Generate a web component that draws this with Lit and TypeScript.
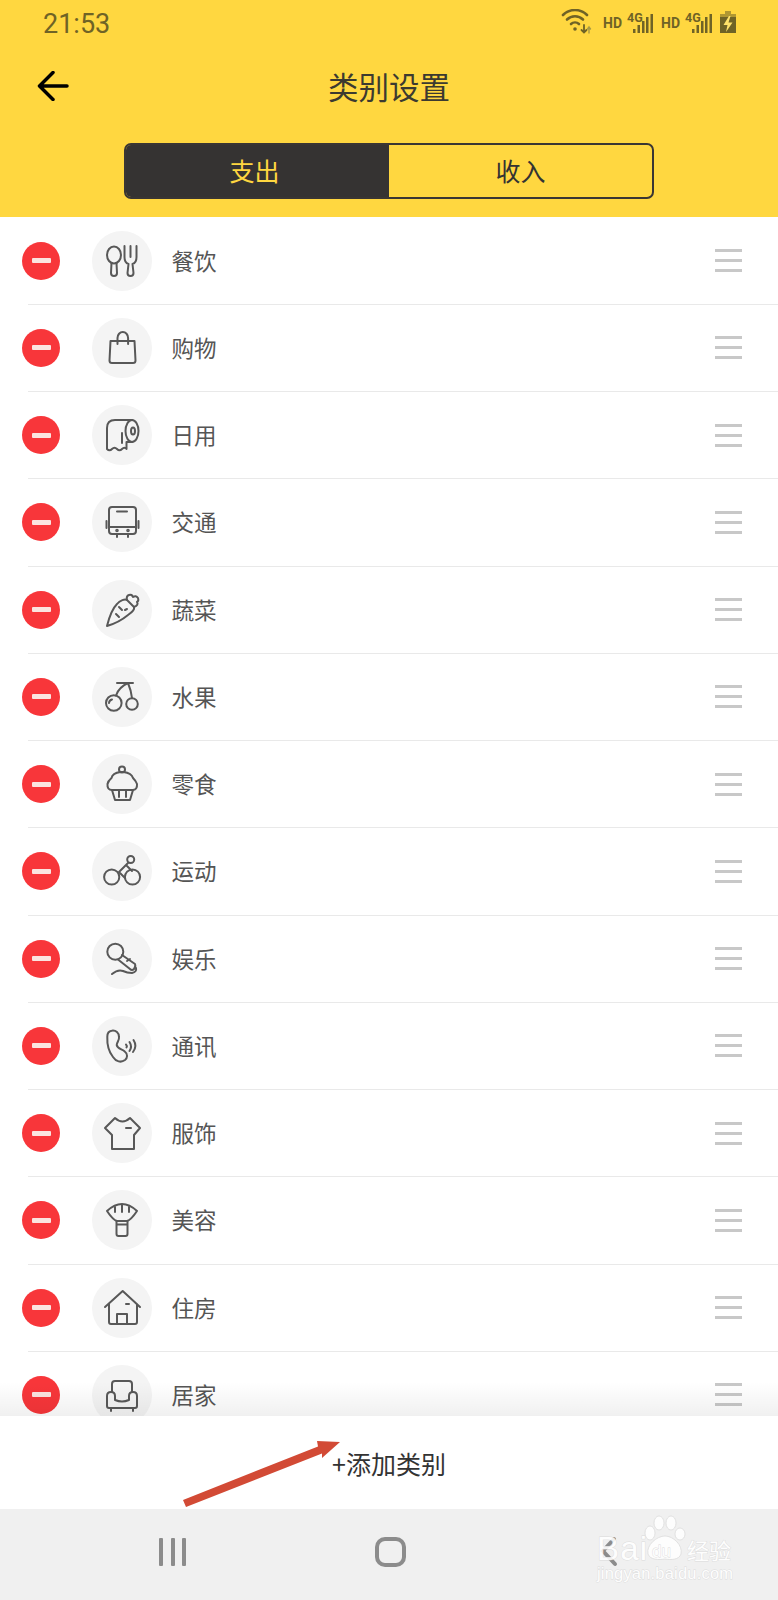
import { LitElement, html, css, svg } from 'lit';
import { customElement } from 'lit/decorators.js';

const icons: Record<string, unknown> = {
  food: svg`<ellipse cx="22" cy="24" rx="7" ry="8.5"/><path d="M19.5 32 L19 42 a3 3 0 0 0 6 0 L24.5 32"/><path d="M32.5 15 V26 q0 6 4 7 L35.5 42 a3 3 0 0 0 6 0 L40.5 33 q4-1 4-7 V15 M38.5 15 V26"/>`,
  bag: svg`<path d="M18.5 23 H42.5 L43.5 42.5 a2.5 2.5 0 0 1-2.5 2.5 H20 a2.5 2.5 0 0 1-2.5-2.5 Z"/><path d="M25.5 26 V20 a5.3 6 0 0 1 10.6 0 V26"/>`,
  roll: svg`<ellipse cx="40" cy="26" rx="6.5" ry="11"/><ellipse cx="41" cy="26" rx="2" ry="3.5"/><path d="M40 15 H23 q-8 0-8 8 V44 q2.5 2.5 5 0 t5 0 t5 0 t4.5 0 V37 H40"/><path d="M30 28 V38"/>`,
  bus: svg`<rect x="17" y="15" width="27" height="27" rx="3"/><path d="M25 19.5 H35 M17 35 H44 M14.5 29 V36 M46.5 29 V36 M25 42 V45 M36 42 V45"/><circle cx="25" cy="38.5" r=".8"/><circle cx="36" cy="38.5" r=".8"/>`,
  carrot: svg`<path d="M15 46 C17 38 21 28 25 24 C28 20 33 19 35 20 L42 27 C43 30 39 33 36 35 C30 40 22 44 15 46Z"/><path d="M35 20 q-1-4 2-5 q3-1 4 2 q3-2 5 1 q1 3-1 4 q2 3-3 5"/><path d="M27 27 l3 3 M24 34 l3 3 M33 30 l2-1"/>`,
  cherry: svg`<circle cx="21.8" cy="36" r="7.8"/><circle cx="40" cy="37" r="5.8"/><path d="M25 16 H41 M36 16 Q27 20 24 28.5 M36 16 Q39 23 40 31"/><path d="M17 36 a4 4 0 0 1 3-3.5"/>`,
  cake: svg`<circle cx="30" cy="15.5" r="3"/><path d="M20 36 q-5 0-4.5-6 q.5-3 4-6 q1-5 9-6 h3 q8 1 9.500 6 q3 3 4 6 q.5 6-4.500 6 Z"/><path d="M20 36 L23 46 H38 L41 36 M27 37 V43 M34 37 V43"/>`,
  bike: svg`<circle cx="19.7" cy="36" r="7.6"/><circle cx="40.5" cy="36" r="7.6"/><circle cx="38.7" cy="18.5" r="3.5"/><path d="M36 22 L27 31 L33 37 M34 24 L40 30"/>`,
  mic: svg`<circle cx="23.3" cy="22.7" r="8"/><path d="M30 26 L43 35 q1 3-1 5 q-2 2-4 0 L26 30.500 M35 32 l3-2"/><path d="M44 39 q1 4-4 5 q-5 0-9-2 q-5-2-11 3"/>`,
  phone: svg`<path d="M19.700 14.700 C24 14 27 17 27 21 C27.500 24 25 26 24.700 29 C25.500 33 30 33 33 35.700 C36 38 35.500 42 33 44 C29 47 24 45.700 21 41 C17 36 15 28 15.300 20.700 C15.300 17 17 15 19.700 14.700Z"/><path d="M34 28.500 q1.500 1.500 .5 3 M37.500 26 q3 4.500 0 9 M41.500 24 q4 6-.5 12"/>`,
  shirt: svg`<path d="M23 15 L13 25 L20 32 V46 H42 V32 L48 25 L38 15 q-7.5 7-15 0Z"/><path d="M34 25 H39"/>`,
  brush: svg`<path d="M15 21 q15-14 30 0 q-6 9-10 10 H25 q-4-1-10-10z"/><path d="M24.500 31 V44 q0 2 2 2 h7 q2 0 2-2 V31 M24.500 34.500 H35.500 M30 15 V22 M23 17 V22 M37 17 V22"/>`,
  house: svg`<path d="M13 29 L30.700 13 L48 29 M17 26 V44 q0 2 2 2 H43 q2 0 2-2 V26"/><path d="M25 46 V36 H35 V46 M34 26 H37"/>`,
  sofa: svg`<path d="M20 27 V19 q0-3 3-3 h14 q3 0 3 3 V27"/><path d="M15 31 q0-4 4-4 q4 0 4 4 v4 q7 3 14 0 v-4 q0-4 4-4 q4 0 4 4 V41 q0 2-2 2 H17 q-2 0-2-2 Z M19 43 V46 M41 43 V46"/>`,
};

const categories = [
  ['餐饮', 'food'], ['购物', 'bag'], ['日用', 'roll'], ['交通', 'bus'], ['蔬菜', 'carrot'],
  ['水果', 'cherry'], ['零食', 'cake'], ['运动', 'bike'], ['娱乐', 'mic'], ['通讯', 'phone'],
  ['服饰', 'shirt'], ['美容', 'brush'], ['住房', 'house'], ['居家', 'sofa'],
];

@customElement('app-root')
export class AppRoot extends LitElement {
  static styles = css`
    :host {
      display: block;
      width: 778px;
      height: 1600px;
      position: relative;
      overflow: hidden;
      background: #fff;
      font-family: "Liberation Sans", "Noto Sans CJK SC", sans-serif;
    }

    .page {
      display: flex;
      flex-direction: column;
      height: 1600px;
    }

    .header {
      flex: none;
      height: 217px;
      background: #ffd740;
      display: flex;
      flex-direction: column;
    }

    .status {
      display: flex;
      align-items: center;
      justify-content: space-between;
      height: 48px;
      padding: 0 42px 0 43px;
    }

    .time {
      font-family: Roboto, sans-serif;
      font-size: 27px;
      color: #6f6326;
    }

    .status-icons {
      display: block;
    }

    .titlebar {
      height: 78px;
      box-sizing: border-box;
      padding-bottom: 3px;
      display: flex;
      align-items: center;
      justify-content: center;
      position: relative;
      font-size: 30.5px;
      color: #3c3a30;
      font-family: "Noto Sans CJK SC", sans-serif;
    }

    .back {
      position: absolute;
      left: 37px;
      top: 23px;
    }

    .tabs {
      margin: 17px 124px 0;
      height: 56px;
      box-sizing: border-box;
      border: 2.5px solid #3a3633;
      border-radius: 7px;
      display: grid;
      grid-template-columns: 263px 1fr;
      overflow: hidden;
      font-size: 25px;
      font-family: "Noto Sans CJK SC", sans-serif;
    }

    .tab {
      display: flex;
      align-items: center;
      justify-content: center;
      padding-bottom: 2px;
      color: #333;
    }

    .tab.on {
      padding-right: 6px;
      background: #353332;
      color: #ffd740;
    }

    .list {
      flex: 1;
      min-height: 0;
      overflow: hidden;
      position: relative;
      padding-top: 0.5px;
    }

    .row {
      height: 86.25px;
      display: flex;
      align-items: center;
      padding: 0 36px 0 22px;
      font-size: 22.5px;
      color: #555;
      font-family: "Noto Sans CJK SC", sans-serif;
    }

    .sep {
      height: 1px;
      margin-left: 28px;
      background: #e9e9e9;
    }

    .minus {
      width: 38px;
      height: 38px;
      border-radius: 50%;
      background: #f8363a;
      display: flex;
      align-items: center;
      justify-content: center;
      flex: none;
    }

    .minus i {
      display: block;
      width: 19px;
      height: 5px;
      border-radius: 1px;
      background: #fbe4e0;
    }

    .icon {
      width: 60px;
      height: 60px;
      margin-left: 32px;
      border-radius: 50%;
      background: #f4f4f4;
      flex: none;
    }

    .icon svg {
      display: block;
      fill: none;
      stroke: #585858;
      stroke-width: 2;
      stroke-linecap: round;
      stroke-linejoin: round;
    }

    .name {
      margin-left: 19.5px;
      padding-bottom: 2px;
      flex: 1;
    }

    .drag {
      width: 27px;
      display: flex;
      flex-direction: column;
      gap: 7px;
    }

    .drag i {
      display: block;
      height: 3px;
      background: #c8c8c8;
    }

    .fade {
      position: absolute;
      left: 0;
      right: 0;
      bottom: 0;
      height: 34px;
      background: linear-gradient(rgba(0, 0, 0, 0), rgba(0, 0, 0, 0.06));
    }

    .add {
      flex: none;
      height: 93px;
      display: flex;
      align-items: center;
      justify-content: center;
      font-size: 25px;
      color: #333;
      font-family: "Noto Sans CJK SC", sans-serif;
    }

    .nav {
      flex: none;
      height: 91px;
      background: #f0f0f0;
      display: flex;
      align-items: center;
      padding: 0 0 6px 159px;
      box-sizing: border-box;
    }

    .bars {
      display: flex;
      gap: 7.5px;
    }

    .bars i {
      display: block;
      width: 4px;
      height: 28px;
      border-radius: 1px;
      background: #8c8c8c;
    }

    .home {
      margin-left: 189px;
      width: 31px;
      height: 30px;
      box-sizing: border-box;
      border: 4px solid #8c8c8c;
      border-radius: 10px;
    }

    .chev {
      margin-left: 194px;
      display: block;
    }

    .arrow {
      position: absolute;
      left: 175px;
      top: 1435px;
    }

    .mark {
      position: absolute;
      left: 590px;
      top: 1510px;
      opacity: 0.88;
    }

    .mark text {
      fill: #fff;
      stroke: #d9d9d9;
      stroke-width: 0.8;
      paint-order: stroke;
      font-family: "Liberation Sans", "Noto Sans CJK SC", sans-serif;
    }
  `;

  renderStatus() {
    return html`<svg class="status-icons" width="178" height="30" viewBox="0 0 178 30">
      <g fill="none" stroke="#6f6326" stroke-width="2.6" stroke-linecap="round" transform="translate(2 -4)">
        <path d="M3 10 a17 17 0 0 1 24 0"/>
        <path d="M7 14.500 a11.500 11.500 0 0 1 16 0"/>
        <path d="M11 19 a6 6 0 0 1 8 0"/>
        <path d="M24 20 V27 M21.500 25 L24 27.500 L26.500 25" stroke-width="1.800"/>
        <path d="M29 28 V22 M27.500 24 L29 22 L30.500 24" stroke="#a89a45" stroke-width="1.400"/>
      </g>
      <circle cx="17" cy="20" r="1.800" fill="#6f6326"/>
      <g fill="#6f6326" font-family="Roboto, sans-serif" font-weight="700">
        <text x="45" y="18.500" font-size="14">HD</text>
        <text x="69" y="13" font-size="12.500">4G</text>
        <text x="103" y="18.500" font-size="14">HD</text>
        <text x="127" y="13" font-size="12.500">4G</text>
        <path d="M75 20h2.500v4h-2.500z M79.500 16h2.500v8h-2.500z M84 12h2.500v12h-2.500z M88 8h2.500v16h-2.500z M92.500 5h2.500v19h-2.500z"/>
        <path d="M134 20h2.500v4h-2.500z M138.500 16h2.500v8h-2.500z M143 12h2.500v12h-2.500z M147 8h2.500v16h-2.500z M151.500 5h2.500v19h-2.500z"/>
        <path d="M167 2 h6 v3 h5 v4 h-16 v-4 h5z" opacity=".55"/>
        <path d="M162 8 h16 v16 h-16z"/>
      </g>
      <path d="M171 7 L165.500 16 H169.500 L168 23 L174.500 13.500 H170.500 L172.500 7Z" fill="#ffe26a"/>
    </svg>`;
  }

  render() {
    return html`
      <div class="page">
        <header class="header">
          <div class="status">
            <span class="time">21:53</span>
            ${this.renderStatus()}
          </div>
          <div class="titlebar">
            <svg class="back" width="32" height="30" viewBox="0 0 32 30" fill="none" stroke="#000" stroke-width="3.500" stroke-linecap="round" stroke-linejoin="round">
              <path d="M30 15 H3 M16 1.500 L2.500 15 L16 28.500"/>
            </svg>
            类别设置
          </div>
          <div class="tabs">
            <div class="tab on">支出</div>
            <div class="tab">收入</div>
          </div>
        </header>
        <section class="list">
          ${categories.map(([name, icon], i) => html`
            ${i > 0 ? html`<div class="sep"></div>` : ''}
            <div class="row">
              <span class="minus"><i></i></span>
              <span class="icon"><svg width="60" height="60" viewBox="0 0 60 60">${icons[icon]}</svg></span>
              <span class="name">${name}</span>
              <span class="drag"><i></i><i></i><i></i></span>
            </div>
          `)}
          <div class="fade"></div>
        </section>
        <div class="add">+添加类别</div>
        <nav class="nav">
          <div class="bars"><i></i><i></i><i></i></div>
          <div class="home"></div>
          <svg class="chev" width="20" height="32" viewBox="0 0 20 32" fill="none" stroke="#8c8c8c" stroke-width="4" stroke-linecap="round">
            <path d="M14 3 L3 15 L15 28"/>
          </svg>
        </nav>
      </div>

      <svg class="arrow" width="175" height="80" viewBox="0 0 175 80">
        <path d="M8 65 L143 11.500 L142 6 L165 7 L147 23 L147 18.500 L11 72 Z" fill="#d24a35"/>
      </svg>

      <svg class="mark" width="150" height="80" viewBox="0 0 150 80">
        <g fill="#fff" stroke="#d9d9d9" stroke-width="0.800">
          <ellipse cx="60" cy="23" rx="5" ry="7"/>
          <ellipse cx="69" cy="13" rx="5" ry="7"/>
          <ellipse cx="81" cy="13" rx="5" ry="7"/>
          <ellipse cx="90" cy="24" rx="5" ry="6"/>
          <path d="M75 26 c8 0 18 9 16 18 c-2 6-10 6-16 5 c-6 1-15 1-17-5 c-2-9 9-18 17-18Z"/>
        </g>
        <text x="7" y="50" font-size="33" textLength="50">Bai</text>
        <text x="62" y="47" font-size="17">du</text>
        <text x="97" y="49" font-size="22">经验</text>
        <text x="7" y="69" font-size="16.500" textLength="136">jingyan.baidu.com</text>
      </svg>
    `;
  }
}
